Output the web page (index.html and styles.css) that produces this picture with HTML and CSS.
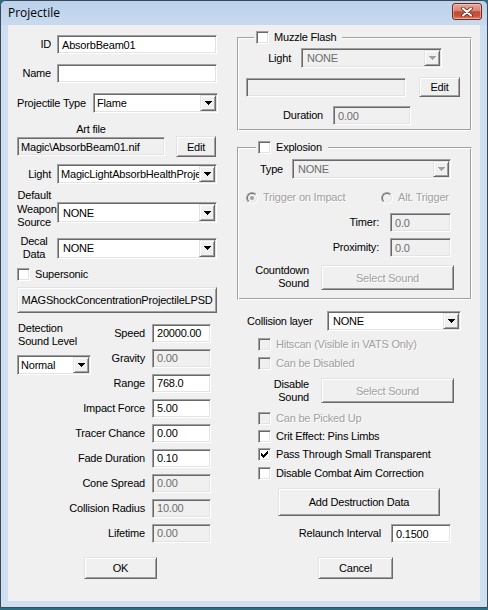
FILE: index.html
```html
<!DOCTYPE html>
<html>
<head>
<meta charset="utf-8">
<title>Projectile</title>
<link rel="stylesheet" href="styles.css">
</head>
<body>
<div class="window">
  <div class="titlebar">
    <span class="title">Projectile</span>
    <div class="close-btn">
      <svg width="12" height="10" viewBox="0 0 12 10"><path d="M2 1.5L10 8.5M10 1.5L2 8.5" stroke="#5a1e12" stroke-width="3.6" stroke-linecap="round"/><path d="M2 1.5L10 8.5M10 1.5L2 8.5" stroke="#fff" stroke-width="2.2" stroke-linecap="round"/></svg>
    </div>
  </div>
  <div class="client">
    <div class="col-left">
      <div class="row"><span class="lbl lbl-side">ID</span><div class="edit w160">AbsorbBeam01</div></div>
      <div class="row mt10"><span class="lbl lbl-side">Name</span><div class="edit w160"></div></div>
      <div class="row mt10 between"><span class="lbl">Projectile Type</span><div class="combo w125"><span class="val tight">Flame</span><span class="drop"><svg class="tri" width="7" height="4" viewBox="0 0 7 4"><path d="M0 0h7v1H0zM1 1h5v1H1zM2 2h3v1H2zM3 3h1v1H3z"/></svg></span></div></div>
      <div class="art-label mt10">Art file</div>
      <div class="row h21"><div class="edit ro w148">Magic\AbsorbBeam01.nif</div><div class="btn w40 h21 ml11">Edit</div></div>
      <div class="row mt7"><span class="lbl lbl-side">Light</span><div class="combo w160"><span class="val tight">MagicLightAbsorbHealthProjectile</span><span class="drop"><svg class="tri" width="7" height="4" viewBox="0 0 7 4"><path d="M0 0h7v1H0zM1 1h5v1H1zM2 2h3v1H2zM3 3h1v1H3z"/></svg></span></div></div>
      <div class="row top mt5"><span class="lbl lbl-side lbl-multi">Default<br>Weapon<br>Source</span><div class="combo w160 h21 mt13"><span class="val">NONE</span><span class="drop"><svg class="tri" width="7" height="4" viewBox="0 0 7 4"><path d="M0 0h7v1H0zM1 1h5v1H1zM2 2h3v1H2zM3 3h1v1H3z"/></svg></span></div></div>
      <div class="row top mt5"><span class="lbl lbl-side lbl-multi centered">Decal<br>Data</span><div class="combo w160 h21 mt3"><span class="val">NONE</span><span class="drop"><svg class="tri" width="7" height="4" viewBox="0 0 7 4"><path d="M0 0h7v1H0zM1 1h5v1H1zM2 2h3v1H2zM3 3h1v1H3z"/></svg></span></div></div>
      <div class="row mt6"><span class="cb"></span><span class="cb-text">Supersonic</span></div>
      <div class="btn w200 h26 mt6">MAGShockConcentrationProjectileLPSD</div>
      <div class="fields mt11">
        <div class="detect">
          <div class="detect-label">Detection<br>Sound Level</div>
          <div class="combo w74 mt7"><span class="val tight">Normal</span><span class="drop"><svg class="tri" width="7" height="4" viewBox="0 0 7 4"><path d="M0 0h7v1H0zM1 1h5v1H1zM2 2h3v1H2zM3 3h1v1H3z"/></svg></span></div>
        </div>
        <span class="flbl fr1">Speed</span><div class="edit">20000.00</div>
        <span class="flbl fr2">Gravity</span><div class="edit dis">0.00</div>
        <span class="flbl fr3">Range</span><div class="edit">768.0</div>
        <span class="flbl">Impact Force</span><div class="edit">5.00</div>
        <span class="flbl">Tracer Chance</span><div class="edit">0.00</div>
        <span class="flbl">Fade Duration</span><div class="edit">0.10</div>
        <span class="flbl">Cone Spread</span><div class="edit dis">0.00</div>
        <span class="flbl">Collision Radius</span><div class="edit dis">10.00</div>
        <span class="flbl">Lifetime</span><div class="edit dis">0.00</div>
      </div>
      <div class="btn w73 h22 mt14 ml67">OK</div>
    </div>

    <div class="col-right">
      <fieldset class="group pb5">
        <legend class="glegend lg16"><span class="cb"></span><span class="cb-text">Muzzle Flash</span></legend>
        <div class="row mt4"><span class="lbl lbl-r w53 mr10">Light</span><div class="combo dis w141"><span class="val">NONE</span><span class="drop"><svg class="tri" width="7" height="4" viewBox="0 0 7 4"><path d="M0 0h7v1H0zM1 1h5v1H1zM2 2h3v1H2zM3 3h1v1H3z"/></svg></span></div></div>
        <div class="row mt9 pl8 h20"><div class="edit dis w160"></div><div class="btn w41 h20 ml13">Edit</div></div>
        <div class="row mt9"><span class="lbl lbl-r w85 mr10">Duration</span><div class="edit dis w78">0.00</div></div>
      </fieldset>

      <fieldset class="group pb9 mt10">
        <legend class="glegend lg18"><span class="cb"></span><span class="cb-text">Explosion</span></legend>
        <div class="row mt5"><span class="lbl lbl-r w45 mr9">Type</span><div class="combo dis w159"><span class="val">NONE</span><span class="drop"><svg class="tri" width="7" height="4" viewBox="0 0 7 4"><path d="M0 0h7v1H0zM1 1h5v1H1zM2 2h3v1H2zM3 3h1v1H3z"/></svg></span></div></div>
        <div class="row mt12 pl8 h13">
          <div class="radio-item w135"><span class="radio"><span class="radio-in"><span class="dot"></span></span></span><span class="cb-text dis-text">Trigger on Impact</span></div>
          <div class="radio-item"><span class="radio"><span class="radio-in"></span></span><span class="cb-text dis-text">Alt. Trigger</span></div>
        </div>
        <div class="row mt9"><span class="lbl lbl-r w141 mr11">Timer:</span><div class="edit dis w61">0.0</div></div>
        <div class="row mt6"><span class="lbl lbl-r w141 mr11">Proximity:</span><div class="edit dis w61">0.0</div></div>
        <div class="row top mt7"><span class="lbl lbl-r lbl-2 w71 mr12">Countdown<br>Sound</span><div class="btn dis w133 h25 mt1">Select Sound</div></div>
      </fieldset>

      <div class="row mt11 pl10"><span class="lbl w80">Collision layer</span><div class="combo w134"><span class="val">NONE</span><span class="drop"><svg class="tri" width="7" height="4" viewBox="0 0 7 4"><path d="M0 0h7v1H0zM1 1h5v1H1zM2 2h3v1H2zM3 3h1v1H3z"/></svg></span></div></div>
      <div class="row mt7 pl21"><span class="cb dis"></span><span class="cb-text dis-text">Hitscan (Visible in VATS Only)</span></div>
      <div class="row mt6 pl21"><span class="cb dis"></span><span class="cb-text dis-text">Can be Disabled</span></div>
      <div class="row top mt8"><span class="lbl lbl-r lbl-2 w72 mr12">Disable<br>Sound</span><div class="btn dis w133 h25">Select Sound</div></div>
      <div class="row mt8 pl21"><span class="cb dis"></span><span class="cb-text dis-text">Can be Picked Up</span></div>
      <div class="row mt5 pl21"><span class="cb"></span><span class="cb-text">Crit Effect: Pins Limbs</span></div>
      <div class="row mt5 pl21"><span class="cb"><svg class="check" width="7" height="7" viewBox="0 0 7 7"><path d="M6 0h1v1H6zM5 1h2v1H5zM0 2h1v1H0zM4 2h3v1H4zM0 3h2v1H0zM3 3h3v1H3zM0 4h5v1H0zM1 5h3v1H1zM2 6h1v1H2z"/></svg></span><span class="cb-text">Pass Through Small Transparent</span></div>
      <div class="row mt6 pl21"><span class="cb"></span><span class="cb-text">Disable Combat Aim Correction</span></div>
      <div class="btn w162 h28 mt8 ml41">Add Destruction Data</div>
      <div class="row mt8"><span class="lbl lbl-r w144 mr10">Relaunch Interval</span><div class="edit w60">0.1500</div></div>
      <div class="btn w75 h22 mt14 ml81">Cancel</div>
    </div>
  </div>
</div>
</body>
</html>
```

FILE: styles.css
```css
* { box-sizing: border-box; }
html, body { margin: 0; padding: 0; }
body {
  width: 488px;
  height: 610px;
  overflow: hidden;
  background: #2b6f7e;
  font-family: "Liberation Sans", Arial, sans-serif;
  font-size: 11px;
  letter-spacing: -0.2px;
  color: #000;
}

.window {
  width: 488px;
  height: 608px;
  background: #cfdff2;
  border: 1px solid #3b4857;
  border-radius: 6px 6px 0 0;
  display: flex;
  flex-direction: column;
}

.titlebar {
  height: 24px;
  flex: none;
  display: flex;
  align-items: flex-start;
  background: linear-gradient(#bcd2ec, #c8daef);
  border-radius: 5px 5px 0 0;
}

.title {
  font-family: "Open Sans", "Noto Sans", sans-serif;
  font-size: 12px;
  letter-spacing: 0;
  line-height: 16px;
  margin: 4px 0 0 7px;
  color: #000;
}

.close-btn {
  margin: 2px 5px 0 auto;
  width: 30px;
  height: 17px;
  border: 1px solid #6e2a20;
  border-radius: 3px;
  background: linear-gradient(#e8a89a 0%, #d98374 45%, #c34a33 52%, #c9523a 80%, #e08a6e 100%);
  box-shadow: inset 0 0 0 1px rgba(255, 220, 210, 0.45);
  display: flex;
  align-items: center;
  justify-content: center;
}

.client {
  flex: none;
  margin-left: 7px;
  width: 472px;
  height: 576px;
  background: #f0f0f0;
  display: flex;
  padding-left: 9px;
}

.col-left {
  width: 201px;
  flex: none;
  display: flex;
  flex-direction: column;
  align-items: flex-start;
  padding-top: 10px;
}

.col-right {
  width: 235px;
  flex: none;
  margin-left: 19px;
  display: flex;
  flex-direction: column;
  align-items: flex-start;
  padding-top: 6px;
}

/* generic rows */
.row { display: flex; align-items: center; flex: none; }
.row.top { align-items: flex-start; }
.row.between { justify-content: space-between; width: 201px; }

.lbl { line-height: 13px; white-space: nowrap; flex: none; }
.lbl-side { width: 34px; text-align: right; margin-right: 6px; }
.lbl-multi { line-height: 13.5px; }
.lbl-2 { line-height: 13px; }
.centered { text-align: center; }
.lbl-r { text-align: right; }

.art-label { width: 148px; height: 13px; line-height: 13px; text-align: center; flex: none; }

/* sunken edit */
.edit, .combo {
  height: 19px;
  flex: none;
  background: #fff;
  border: 1px solid;
  border-color: #a0a0a0 #fff #fff #a0a0a0;
  box-shadow: inset 1px 1px 0 #696969, inset -1px -1px 0 #e3e3e3;
  display: flex;
  align-items: center;
  white-space: nowrap;
  overflow: hidden;
}
.edit { padding-left: 4px; }
.edit.ro { background: #f0f0f0; padding-left: 3px; }
.edit.dis { background: #f0f0f0; color: #6d6d6d; }

.combo { height: 20px; padding: 1px; }
.combo .val { flex: 1; overflow: hidden; white-space: nowrap; padding-left: 4px; line-height: 14px; }
.combo .val.tight { padding-left: 2px; }
.combo.dis { background: #f0f0f0; color: #6d6d6d; }

.drop {
  width: 16px;
  height: 100%;
  flex: none;
  background: #f0f0f0;
  border: 1px solid;
  border-color: #e3e3e3 #696969 #696969 #e3e3e3;
  box-shadow: inset 1px 1px 0 #fff, inset -1px -1px 0 #a0a0a0;
  display: flex;
  align-items: center;
  justify-content: center;
}
.tri { display: block; fill: #000; shape-rendering: crispEdges; }
.combo.dis .tri { fill: #a0a0a0; }

/* raised button */
.btn {
  flex: none;
  background: #f0f0f0;
  border: 1px solid;
  border-color: #e3e3e3 #696969 #696969 #e3e3e3;
  box-shadow: inset 1px 1px 0 #fff, inset -1px -1px 0 #a0a0a0;
  display: flex;
  align-items: center;
  justify-content: center;
  white-space: nowrap;
}
.btn.dis { color: #a0a0a0; text-shadow: 1px 1px 0 #fff; }

/* checkbox */
.cb {
  width: 13px;
  height: 13px;
  flex: none;
  display: inline-block;
  vertical-align: top;
  background: #fff;
  border: 1px solid;
  border-color: #a0a0a0 #fff #fff #a0a0a0;
  box-shadow: inset 1px 1px 0 #696969, inset -1px -1px 0 #e3e3e3;
}
.cb.dis { background: #f0f0f0; }
.check { display: block; fill: #000; shape-rendering: crispEdges; margin: 2px 0 0 2px; }
.cb-text { margin-left: 5px; line-height: 13px; white-space: nowrap; }
.dis-text { color: #a0a0a0; text-shadow: 1px 1px 0 #fff; }

/* radio */
.radio-item { display: flex; align-items: center; flex: none; }
.radio {
  width: 12px;
  height: 12px;
  border-radius: 50%;
  border: 1px solid;
  border-color: #a0a0a0 #fff #fff #a0a0a0;
  flex: none;
}
.radio-in {
  display: flex;
  align-items: center;
  justify-content: center;
  width: 10px;
  height: 10px;
  border-radius: 50%;
  border: 1px solid;
  border-color: #696969 #e3e3e3 #e3e3e3 #696969;
  background: #f0f0f0;
}
.dot { width: 4px; height: 4px; border-radius: 50%; background: #a0a0a0; }

/* group boxes */
.group {
  width: 235px;
  margin: 0;
  padding: 0;
  border: 1px solid;
  border-color: #a0a0a0 #fff #fff #a0a0a0;
  box-shadow: inset 1px 1px 0 #fff, inset -1px -1px 0 #a0a0a0;
  min-width: 0;
  flex: none;
}
.glegend {
  height: 13px;
  line-height: 13px;
  padding: 0 6px 0 2px;
  background: #f0f0f0;
  white-space: nowrap;
}
.glegend .cb-text { display: inline-block; vertical-align: top; }
.lg16 { margin-left: 16px; }
.lg18 { margin-left: 18px; }

/* left fields grid */
.fields {
  display: grid;
  grid-template-columns: 128px 59px;
  grid-auto-rows: 19px;
  column-gap: 7px;
  row-gap: 6px;
  flex: none;
}
.fields .edit { width: 59px; }
.flbl { grid-column: 1; justify-self: end; align-self: center; line-height: 13px; white-space: nowrap; }
.fr1 { grid-row: 1; }
.fr2 { grid-row: 2; }
.fr3 { grid-row: 3; }
.detect {
  grid-column: 1;
  grid-row: 1 / 4;
  justify-self: start;
  align-self: start;
  margin-top: -2px;
  display: flex;
  flex-direction: column;
}
.detect-label { line-height: 13px; margin-left: 1px; }

/* sizes and spacing */
.w40 { width: 40px; } .w41 { width: 41px; } .w45 { width: 45px; } .w53 { width: 53px; }
.w60 { width: 60px; } .w61 { width: 61px; } .w71 { width: 71px; } .w72 { width: 72px; }
.w73 { width: 73px; } .w74 { width: 74px; } .w75 { width: 75px; } .w78 { width: 78px; }
.w80 { width: 80px; } .w85 { width: 85px; } .w125 { width: 125px; } .w133 { width: 133px; }
.w134 { width: 134px; } .w135 { width: 135px; } .w141 { width: 141px; } .w144 { width: 144px; }
.w148 { width: 148px; } .w159 { width: 159px; } .w160 { width: 160px; } .w162 { width: 162px; }
.w200 { width: 200px; }
.h13 { height: 13px; } .h20 { height: 20px; } .h21 { height: 21px; } .h22 { height: 22px; }
.h25 { height: 25px; } .h26 { height: 26px; } .h28 { height: 28px; }
.combo.h21 { height: 21px; }
.btn.h20 { height: 20px; }
.mt1 { margin-top: 1px; } .mt3 { margin-top: 3px; } .mt4 { margin-top: 4px; } .mt5 { margin-top: 5px; }
.mt6 { margin-top: 6px; } .mt7 { margin-top: 7px; } .mt8 { margin-top: 8px; } .mt9 { margin-top: 9px; }
.mt10 { margin-top: 10px; } .mt11 { margin-top: 11px; } .mt12 { margin-top: 12px; } .mt13 { margin-top: 13px; }
.mt14 { margin-top: 14px; }
.ml11 { margin-left: 11px; } .ml13 { margin-left: 13px; } .ml41 { margin-left: 41px; }
.ml67 { margin-left: 67px; } .ml81 { margin-left: 81px; }
.mr9 { margin-right: 9px; } .mr10 { margin-right: 10px; } .mr11 { margin-right: 11px; } .mr12 { margin-right: 12px; }
.pl8 { padding-left: 8px; } .pl10 { padding-left: 10px; } .pl21 { padding-left: 21px; }
.pb5 { padding-bottom: 5px; } .pb9 { padding-bottom: 9px; }
```
